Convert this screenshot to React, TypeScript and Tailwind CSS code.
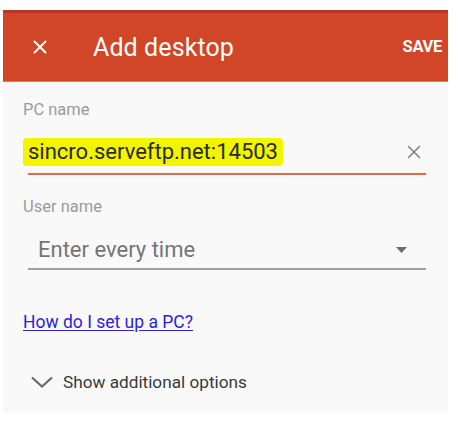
import { X } from "lucide-react";

const Field = ({ label, children }: { label: string; children: React.ReactNode }) => (
  <div className="flex flex-col">
    <div className="text-[16.5px] leading-none text-[#9b9b9b]">{label}</div>
    {children}
  </div>
);

export default function App() {
  return (
    <div className="w-[458px] h-[428px] bg-white pt-[10px] pl-[3px] font-['Roboto',sans-serif]">
      <div className="w-[445px] h-[403px] flex flex-col bg-[#f9f9f9]">
        {/* app bar */}
        <div className="h-[72px] flex items-center bg-[#d04626] border-t-[3px] border-[#b8391f] border-b border-b-[#e27a62] text-white">
          <X className="ml-[26px] w-[22px] h-[22px]" strokeWidth={2.2} />
          <div className="ml-[42px] mt-[2px] text-[25px] tracking-[0.1px]">Add desktop</div>
          <div className="ml-auto mr-[6px] text-[16.5px] font-bold tracking-[-0.3px]">SAVE</div>
        </div>

        <div className="flex flex-col pl-[20px] pr-[22px] pt-[20px]">
          <Field label="PC name">
            <div className="mt-[19px] flex items-center">
              <span className="bg-[#f3f500] px-[5px] py-[1px] text-[22px] leading-[26px] text-[#2a2a2a] rounded-sm">
                sincro.serveftp.net:14503
              </span>
              <X className="ml-auto mr-[1px] w-[22px] h-[22px] text-[#7a7a7a]" strokeWidth={1.6} />
            </div>
            <div className="mt-[7px] ml-[5px] h-[2px] bg-[#dc6a52]" />
          </Field>

          <div className="mt-[24px]">
            <Field label="User name">
              <div className="mt-[22px] ml-[15px] flex items-center">
                <span className="text-[22px] leading-[26px] text-[#757575]">Enter every time</span>
                <svg className="ml-auto mr-[19px]" width="11" height="6" viewBox="0 0 11 6">
                  <path d="M0 0h11L5.5 6z" fill="#6e6e6e" />
                </svg>
              </div>
              <div className="mt-[5px] ml-[5px] h-[2px] bg-[#a0a0a0]" />
            </Field>
          </div>

          <a href="#" className="mt-[44px] text-[17.5px] leading-none text-[#2b24d6] underline underline-offset-2 w-fit">
            How do I set up a PC?
          </a>

          <div className="mt-[38px] ml-[8px] flex items-center gap-[10px]">
            <svg width="22" height="12" viewBox="0 0 22 12">
              <path d="M1 1.5l10 9 10-9" fill="none" stroke="#6a6a6a" strokeWidth="2.2" />
            </svg>
            <span className="text-[17.2px] leading-[24px] text-[#3a3a3a]">Show additional options</span>
          </div>
        </div>
      </div>
    </div>
  );
}
